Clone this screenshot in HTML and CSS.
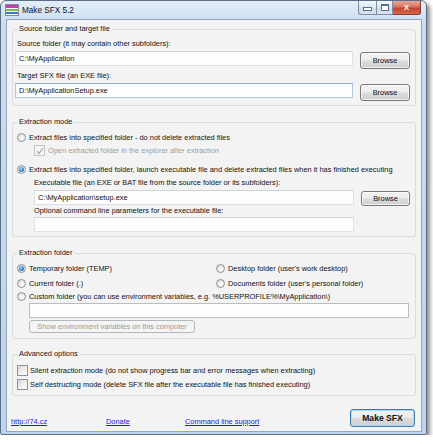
FILE: index.html
```html
<!DOCTYPE html>
<html lang="en">
     <head>
          <meta charset="UTF-8">
          <meta name="viewport" content="width=device-width, initial-scale=1.0">
          <title>Make SFX 5.2</title>
          <link rel="stylesheet" href="styles.css">
     </head>
     <body>
          <div class="window">
               <div class="titlebar">
                    <div class="title">
                         <span class="app-icon"><i class="st-pink"></i><i class="st-green"></i><i class="st-blue"></i></span>
                         <span class="title-text">Make SFX 5.2</span>
                    </div>
                    <div class="caption-btns">
                         <span class="cap cap-min"><i></i></span>
                         <span class="cap cap-max"><i></i></span>
                         <span class="cap cap-close">X</span>
                    </div>
               </div>
               <div class="client">
                    <fieldset class="group g-source">
                         <legend>Source folder and target file</legend>
                         <div class="lbl">Source folder (it may contain other subfolders):</div>
                         <div class="field-row">
                              <input class="txt" type="text" value="C:\MyApplication">
                              <button class="btn">Browse</button>
                         </div>
                         <div class="lbl lbl-gap">Target SFX file (an EXE file):</div>
                         <div class="field-row">
                              <input class="txt txt-focus" type="text" value="D:\MyApplicationSetup.exe">
                              <button class="btn">Browse</button>
                         </div>
                    </fieldset>

                    <fieldset class="group g-mode">
                         <legend>Extraction mode</legend>
                         <div class="opt"><span class="radio"></span>Extract files into specified folder - do not delete extracted files</div>
                         <div class="opt opt-sub disabled">
                              <span class="check check-off">
                                   <svg width="8" height="8" viewBox="0 0 8 8"><path d="M1 4.2 L3 6.5 L7 1.2" fill="none" stroke="#a8a8a8" stroke-width="1.2"/></svg>
                              </span>Open extracted folder in the explorer after extraction
                         </div>
                         <div class="opt opt-gap"><span class="radio on"></span>Extract files into specified folder, launch executable file and delete extracted files when it has finished executing</div>
                         <div class="sub">
                              <div class="lbl lbl-sub">Executable file (an EXE or BAT file from the source folder or its subfolders):</div>
                              <div class="field-row row-sub">
                                   <input class="txt" type="text" value="C:\MyApplication\setup.exe">
                                   <button class="btn btn-short">Browse</button>
                              </div>
                              <div class="lbl">Optional command line parameters for the executable file:</div>
                              <div class="field-row row-params">
                                   <input class="txt" type="text" value="">
                                   <span class="btn-space"></span>
                              </div>
                         </div>
                    </fieldset>

                    <fieldset class="group g-folder">
                         <legend>Extraction folder</legend>
                         <div class="folder-grid">
                              <div class="opt opt-first"><span class="radio on"></span>Temporary folder (TEMP)</div>
                              <div class="opt opt-first"><span class="radio"></span>Desktop folder (user's work desktop)</div>
                              <div class="opt"><span class="radio"></span>Current folder (.)</div>
                              <div class="opt"><span class="radio"></span>Documents folder (user's personal folder)</div>
                         </div>
                         <div class="opt opt-custom"><span class="radio"></span>Custom folder (you can use environment variables, e.g. %USERPROFILE%\MyApplication\)</div>
                         <input class="txt txt-custom" type="text" value="">
                         <button class="btn btn-env" disabled>Show environment variables on this computer</button>
                    </fieldset>

                    <fieldset class="group g-adv">
                         <legend>Advanced options</legend>
                         <div class="opt opt-check"><span class="check"></span>Silent extraction mode (do not show progress bar and error messages when extracting)</div>
                         <div class="opt opt-check"><span class="check"></span>Self destructing mode (delete SFX file after the executable file has finished executing)</div>
                    </fieldset>

                    <div class="footer">
                         <a href="#">http://74.cz</a>
                         <a href="#">Donate</a>
                         <a href="#">Command line support</a>
                         <button class="btn btn-make">Make SFX</button>
                    </div>
               </div>
          </div>
     </body>
</html>
```

FILE: styles.css
```css
body {
     margin: 0;
     background-color: #ffffff;
     font-family: "Liberation Sans", Arial, sans-serif;
     font-size: 7.4px;
     color: #111111;
}
.window {
     width: 427px;
     height: 435px;
     box-sizing: border-box;
     border: 1px solid #5d6f86;
     border-radius: 6px 6px 2px 2px;
     background: linear-gradient(180deg, #e3eef9 0, #cadcf0 24px, #bed4ec 100%);
     box-shadow: 3px 3px 4px rgba(0, 0, 0, 0.45);
     display: flex;
     flex-direction: column;
}
.titlebar {
     height: 18px;
     display: flex;
     justify-content: space-between;
     align-items: flex-start;
     padding: 0 5px 0 4px;
}
.title {
     display: flex;
     align-items: center;
     gap: 3px;
     height: 18px;
}
.app-icon {
     width: 12px;
     height: 10px;
     display: flex;
     flex-direction: column;
     gap: 1px;
     background-color: #ffffff;
     border: 1px solid #8a8a9a;
}
.app-icon i {
     display: block;
     height: 2px;
}
.app-icon .st-pink {
     height: 3px;
     background-color: #c83cb4;
}
.app-icon .st-green {
     background-color: #7cc04a;
}
.app-icon .st-blue {
     background-color: #3a78d0;
}
.title-text {
     font-size: 8.2px;
     color: #101010;
}
.caption-btns {
     display: flex;
}
.cap {
     height: 14px;
     box-sizing: border-box;
     border: 1px solid #7d8ea4;
     border-top: none;
     display: flex;
     align-items: center;
     justify-content: center;
     background: linear-gradient(180deg, #f2f7fc 0, #dbe6f3 50%, #c9d8ea 51%, #d7e4f2 100%);
}
.cap-min {
     width: 18px;
     border-radius: 0 0 0 3px;
     border-right: none;
}
.cap-min i {
     width: 7px;
     height: 2px;
     margin-top: 3px;
     border: 1px solid #5f6f84;
     background-color: #ffffff;
}
.cap-max {
     width: 17px;
}
.cap-max i {
     width: 6px;
     height: 4px;
     border: 1px solid #5f6f84;
     border-top-width: 2px;
     background-color: #ffffff;
}
.cap-close {
     width: 28px;
     border-left: none;
     border-color: #8a3a30;
     border-radius: 0 0 3px 0;
     background: linear-gradient(180deg, #e9a697 0, #d87660 45%, #c2432b 55%, #d46a4c 100%);
     color: #ffffff;
     font-weight: bold;
     font-size: 8px;
}
.client {
     flex: 1;
     margin: 0 4px 2px 5px;
     border: 1px solid #94a7bc;
     background-color: #f3f3f3;
     padding: 4px 5px 0 5px;
     display: flex;
     flex-direction: column;
}
.group {
     margin: 0;
     border: 1px solid #d7dde3;
     border-radius: 3px;
     padding: 5px 5px 4px 2px;
     min-width: 0;
}
.group legend {
     padding: 0 2px;
     margin-left: 2px;
     line-height: 10px;
}
.g-mode {
     margin-top: 11px;
     padding-top: 4px;
}
.g-folder {
     margin-top: 11px;
     padding-top: 3px;
     padding-bottom: 5px;
}
.g-adv {
     margin-top: 10px;
     padding-top: 4px;
}
.lbl {
     line-height: 10px;
     padding-left: 2px;
}
.lbl-gap {
     margin-top: 2px;
}
.field-row {
     display: flex;
     align-items: flex-start;
     gap: 7px;
     margin-top: 2px;
}
.field-row .txt {
     flex: 1;
}
.txt {
     height: 15px;
     box-sizing: border-box;
     margin: 0;
     border: 1px solid #dde1e5;
     border-top-color: #cfd3d8;
     background-color: #fdfdfd;
     padding: 0 3px;
     font-family: "Liberation Sans", Arial, sans-serif;
     font-size: 7.4px;
     color: #111111;
     outline: none;
}
.txt-focus {
     border-color: #b3c8e0;
     border-top-color: #93aed0;
}
.btn {
     height: 17px;
     width: 50px;
     margin: 1px 0 0 0;
     box-sizing: border-box;
     border: 1px solid #7a7a7a;
     border-radius: 3px;
     background: linear-gradient(180deg, #f4f4f4 0, #ebebeb 48%, #dcdcdc 52%, #cfcfcf 100%);
     box-shadow: inset 0 0 0 1px rgba(255, 255, 255, 0.7);
     font-family: "Liberation Sans", Arial, sans-serif;
     font-size: 7.4px;
     color: #111111;
     padding: 0;
}
.btn-short {
     height: 15px;
     width: 49px;
}
.btn-space {
     width: 49px;
}
.opt {
     display: flex;
     align-items: center;
     gap: 3px;
     height: 13px;
     padding-left: 2px;
     white-space: nowrap;
}
.opt-sub {
     padding-left: 19px;
}
.opt-gap {
     margin-top: 6px;
}
.disabled {
     color: #9c9c9c;
}
.sub {
     padding-left: 19px;
}
.lbl-sub {
     margin-top: 2px;
     padding-left: 0;
}
.sub .lbl {
     padding-left: 0;
}
.row-sub {
     height: 16px;
}
.row-params {
     margin-top: 1px;
}
.radio {
     width: 7px;
     height: 7px;
     flex: none;
     border: 1px solid #8d9296;
     border-radius: 50%;
     background: radial-gradient(circle at 60% 65%, #ffffff 0, #e4e4e4 60%, #cfcfcf 100%);
     display: flex;
     align-items: center;
     justify-content: center;
}
.radio.on::after {
     content: "";
     width: 5px;
     height: 5px;
     border-radius: 50%;
     background: radial-gradient(circle at 40% 35%, #9fdcff 0, #2d83cf 55%, #124f8c 100%);
}
.check {
     width: 9px;
     height: 9px;
     flex: none;
     border: 1px solid #8f9398;
     background: linear-gradient(135deg, #d6d6d6 0, #f2f2f2 60%, #fbfbfb 100%);
     display: flex;
     align-items: center;
     justify-content: center;
}
.check-off {
     border-color: #c2c5c8;
     background: #f6f6f6;
}
.folder-grid {
     display: grid;
     grid-template-columns: 199px 1fr;
}
.folder-grid .opt {
     height: 14px;
}
.folder-grid .opt-first {
     height: 15px;
}
.txt-custom {
     margin-left: 14px;
     width: 380px;
     border-color: #b9bec3;
}
.btn-env {
     margin: 2px 0 0 14px;
     width: 166px;
     height: 13px;
     border-color: #b4b8bc;
     background: #f4f4f4;
     box-shadow: none;
     color: #9a9a9a;
}
.opt-check {
     height: 14px;
     gap: 2px;
}
.footer {
     display: grid;
     grid-template-columns: 95px 79px 1fr auto;
     align-items: end;
     margin: 13px 1px 0 -1px;
}
.footer a {
     color: #1a1aee;
     line-height: 11px;
     justify-self: start;
}
.btn-make {
     width: 65px;
     height: 18px;
     margin: 0;
     border-color: #3d7bad;
     box-shadow: inset 0 0 0 1px #a8dcf6;
     font-weight: bold;
     font-size: 8.6px;
}
```
